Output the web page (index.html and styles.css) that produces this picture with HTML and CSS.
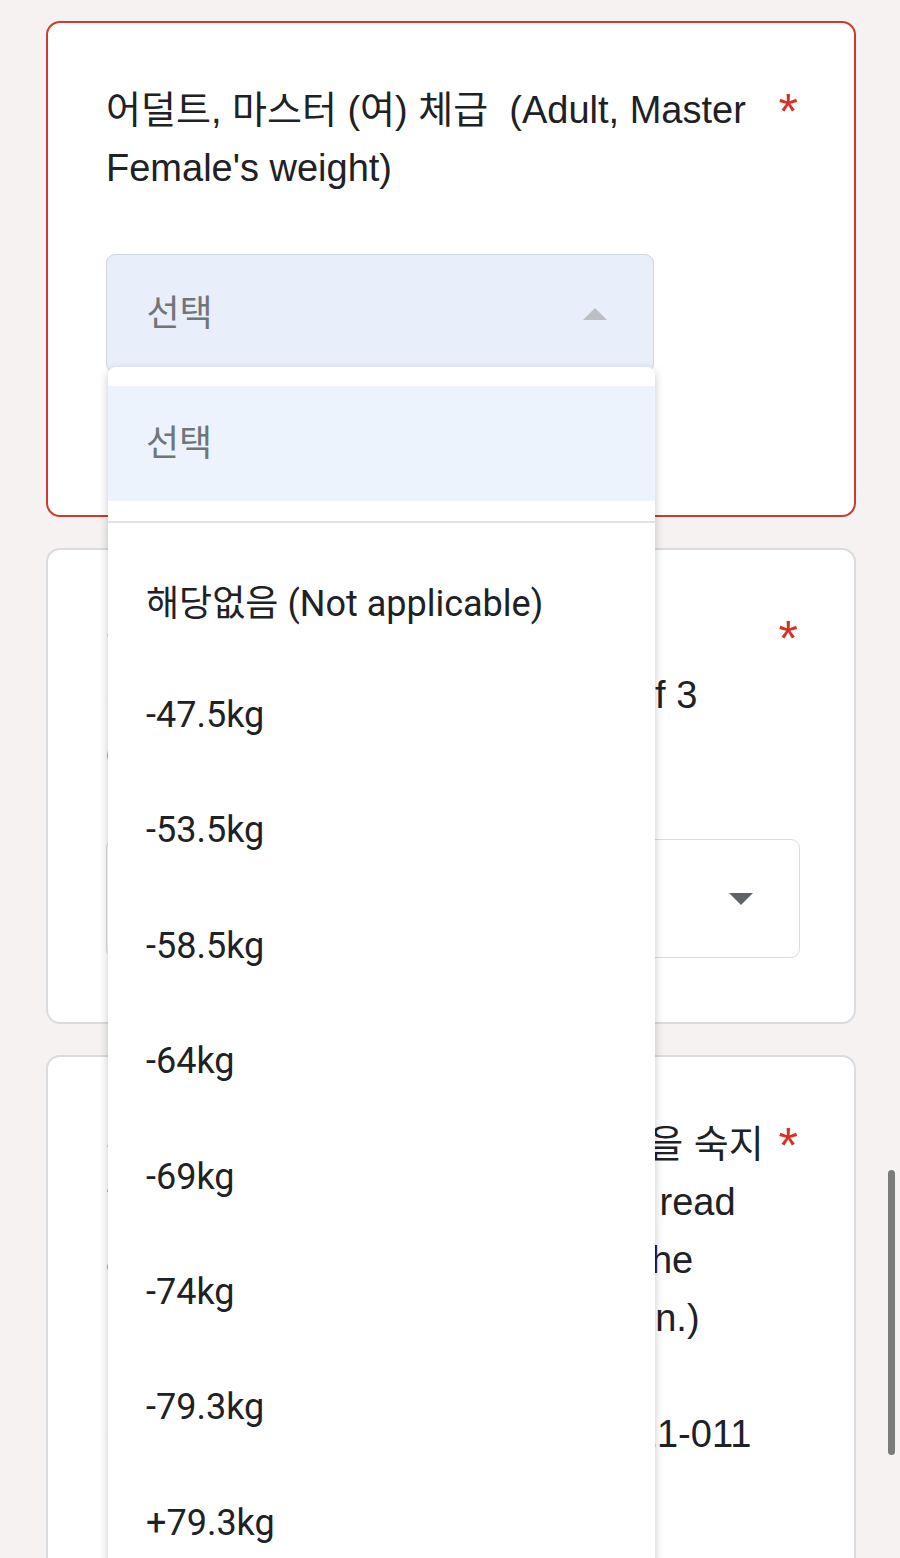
FILE: index.html
```html
<!DOCTYPE html>
<html lang="ko">
<head>
<meta charset="utf-8">
<title>체급 선택</title>
<link rel="stylesheet" href="styles.css">
</head>
<body>
<div class="page">
  <section class="card card-error">
    <div class="q-head">
      <div class="q-title">어덜트, 마스터 (여) 체급&nbsp; (Adult, Master Female's weight)</div>
      <span class="req">*</span>
    </div>
    <div class="field">
      <div class="select select-open">
        <span class="placeholder">선택</span>
        <span class="tri tri-up"></span>
      </div>
      <div class="menu">
        <div class="opt opt-selected">선택</div>
        <div class="menu-divider"></div>
        <div class="opt">해당없음 (Not applicable)</div>
        <div class="opt">-47.5kg</div>
        <div class="opt">-53.5kg</div>
        <div class="opt">-58.5kg</div>
        <div class="opt">-64kg</div>
        <div class="opt">-69kg</div>
        <div class="opt">-74kg</div>
        <div class="opt">-79.3kg</div>
        <div class="opt">+79.3kg</div>
      </div>
    </div>
  </section>

  <section class="card">
    <div class="q-head">
      <div class="q-title lines">출전 종목을 선택하세요<br>(Choose your event, maximum of 3<br>events.)</div>
      <span class="req">*</span>
    </div>
    <div class="field">
      <div class="select">
        <span class="placeholder">선택</span>
        <span class="tri tri-down"></span>
      </div>
    </div>
  </section>

  <section class="card card-last">
    <div class="q-head">
      <div class="q-title lines">본인은 대회요강 및 경기 세부 규정을 숙지<br>하였으며 이에 동의합니다. (I have read<br>and understood all the terms of the<br>rulebook for this 2021 competition.)<br><br>참고 (Reference): 협회공문 제2021-011</div>
      <span class="req">*</span>
    </div>
  </section>
</div>
<div class="scrollbar"></div>
</body>
</html>
```

FILE: styles.css
```css
* { box-sizing: border-box; }

html, body {
  margin: 0;
  padding: 0;
  background: #f5f2f1;
}

body {
  font-family: "Liberation Sans", Arial, "Noto Sans CJK KR", sans-serif;
  color: #202124;
  overflow: hidden;
}

.page {
  height: 1558px;
  overflow: hidden;
  padding: 21px 44px 0 46px;
  display: flex;
  flex-direction: column;
  gap: 31px;
}

.card {
  flex-shrink: 0;
  background: #fff;
  border: 2px solid #dadce0;
  border-radius: 14px;
  padding: 58px 54px 64px 58px;
}

.card-error {
  border-color: #cf3a2f;
  padding-bottom: 142px;
}

.card-last {
  padding-bottom: 240px;
}

.q-head {
  display: flex;
  align-items: flex-start;
}

.q-title {
  flex: 1;
  min-width: 0;
  font-size: 38px;
  line-height: 58px;
}

.q-title.lines { white-space: nowrap; }

.req {
  color: #d93025;
  font-size: 50px;
  line-height: 58px;
  margin: 2px 2px 0 10px;
}

.field {
  position: relative;
  margin-top: 57px;
}

.select {
  height: 119px;
  border: 1.5px solid #dadce0;
  border-radius: 9px;
  display: flex;
  align-items: center;
  justify-content: space-between;
  padding: 0 46px 0 39.5px;
  font-family: Roboto, "Noto Sans CJK KR", sans-serif;
  font-size: 36px;
  color: #70757a;
  background: #fff;
}

.placeholder { margin-top: -7px; }

.select-open {
  width: 548px;
  background: #e8effb;
  border-color: #cfd6e1;
}

.tri {
  width: 0;
  height: 0;
  border-left: 12px solid transparent;
  border-right: 12px solid transparent;
}

.tri-up { border-bottom: 12px solid #bcc0c4; }
.tri-down { border-top: 12px solid #5f6368; }

.menu {
  position: absolute;
  top: 113px;
  left: 2px;
  width: 547px;
  z-index: 10;
  background: #fff;
  border-radius: 8px 8px 0 0;
  box-shadow: 0 3px 10px rgba(0, 0, 0, 0.22);
  padding-top: 19px;
  font-family: Roboto, "Noto Sans CJK KR", sans-serif;
  font-size: 36px;
  color: #202124;
}

.opt {
  height: 115.4px;
  display: flex;
  align-items: center;
  padding-left: 38px;
  white-space: nowrap;
}

.opt-selected {
  height: 115px;
  padding-bottom: 8px;
  background: #edf3fd;
  color: #70757a;
}

.menu-divider {
  height: 2px;
  background: #e2e3e5;
  margin: 20px 0 19px;
}

.scrollbar {
  position: fixed;
  right: 5px;
  top: 1170px;
  width: 7px;
  height: 285px;
  border-radius: 4px;
  background: #7b7b7b;
}
```
